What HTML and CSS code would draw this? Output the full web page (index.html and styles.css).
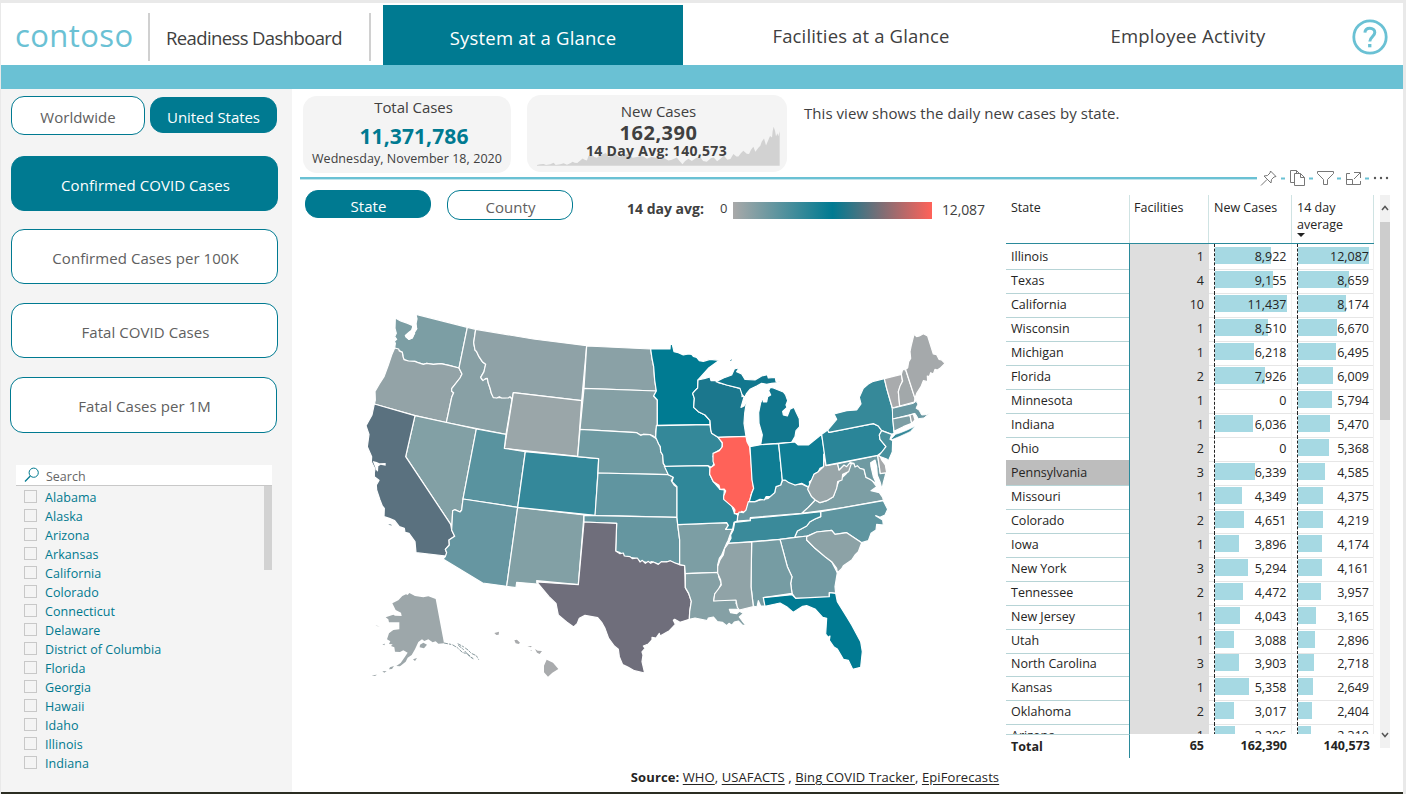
FILE: index.html
```html
<!DOCTYPE html>
<html lang="en">
<head>
<meta charset="utf-8">
<title>Readiness Dashboard</title>
<link rel="stylesheet" href="styles.css">
</head>
<body>
<div class="report">
  <header class="header">
    <div class="brand">contoso</div>
    <div class="report-title">Readiness Dashboard</div>
    <nav class="tabs">
      <a class="tab tab-active">System at a Glance</a>
      <a class="tab tab-facilities">Facilities at a Glance</a>
      <a class="tab tab-employees">Employee Activity</a>
    </nav>
    <svg class="help" viewBox="0 0 36 36"><circle cx="18" cy="18" r="16.2" fill="none" stroke="#6ac1d4" stroke-width="2.8"/><path d="M12.9 13.6C13.1 10.8 15 9.3 17.8 9.3C20.8 9.3 22.8 11 22.8 13.5C22.8 17.6 17.8 17.6 17.8 22.6" fill="none" stroke="#6ac1d4" stroke-width="3"/><rect x="16.1" y="25" width="3.3" height="3.3" fill="#6ac1d4"/></svg>
  </header>
  <div class="band"></div>
  <main class="main">
    <aside class="sidebar">
      <div class="scope">
        <button class="pill scope-world">Worldwide</button>
        <button class="pill pill-on scope-us">United States</button>
      </div>
      <div class="measures">
        <button class="pill pill-on measure">Confirmed COVID Cases</button>
        <button class="pill measure">Confirmed Cases per 100K</button>
        <button class="pill measure">Fatal COVID Cases</button>
        <button class="pill measure measure-last">Fatal Cases per 1M</button>
      </div>
      <div class="slicer">
        <div class="search">
          <svg class="search-icon" viewBox="0 0 16 16"><circle cx="9.7" cy="5.7" r="4.6" fill="none" stroke="#00798f"/><path d="M6.3 9L1 14.5" stroke="#00798f" stroke-width="1.2"/></svg>
          <span>Search</span>
        </div>
        <div class="slicer-body">
          <ul class="states" id="states"></ul>
          <div class="slicer-thumb"></div>
        </div>
      </div>
    </aside>
    <section class="content">
      <div class="cards">
        <div class="card card-total">
          <div class="card-label card-total-label">Total Cases</div>
          <div class="card-total-value">11,371,786</div>
          <div class="card-date">Wednesday, November 18, 2020</div>
        </div>
        <div class="card card-new">
          <svg class="spark" viewBox="725 120 730 121" preserveAspectRatio="none"><path fill="#d2d2d2" d="M725 240V238L735 236L745 235L752 238L765 236L775 231L781 238L795 236L805 233L815 237L825 233L832 228L838 231L846 232L855 224L862 218L868 222L875 224L880 210L890 207L897 214L905 216L915 208L925 205L932 202L940 214L950 208L960 204L972 214L985 207L1000 205L1012 216L1025 214L1035 211L1045 212L1055 219L1068 214L1080 215L1092 222L1105 216L1120 224L1130 222L1145 215L1152 224L1162 236L1170 226L1180 219L1190 226L1203 217L1215 213L1224 226L1235 228L1248 217L1256 215L1266 227L1277 218L1286 209L1297 222L1306 220L1315 205L1324 212L1330 212L1338 202L1345 195L1355 204L1362 205L1368 192L1375 183L1381 198L1390 186L1396 180L1400 168L1407 158L1413 179L1420 162L1425 150L1431 155L1433 135L1436 122L1440 134L1443 152L1447 142L1450 151L1454 136V240Z"/></svg>
          <div class="card-text">
            <div class="card-label">New Cases</div>
            <div class="card-new-value">162,390</div>
            <div class="card-avg">14 Day Avg: 140,573</div>
          </div>
        </div>
        <p class="description">This view shows the daily new cases by state.</p>
      </div>
      <div class="divider">
        <div class="rule"></div>
        <svg class="tools" viewBox="0 0 136 24">
          <g stroke="#6ac1d4" stroke-width="2"><path d="M24 12.5h4M52 12.5h4M80 12.5h4M108 12.5h4"/></g>
          <g fill="none" stroke="#777" stroke-width="1">
            <path d="M4 19.5L10 13.5M13.5 5L19 10.5L17 11L14.5 13.5L14 17L7 10L10.5 9.5L13 7Z"/>
            <path d="M37 16.5H33.5V4.5H39.5L42.5 7.5M37.5 7.500H43.500L47.500 11.500V19.500H37.500ZM43.500 7.500V11.500H47.500M39.500 4.500V7.500"/>
            <path d="M60.500 5.500H76.500V7.500L70.500 13.500V18.500H66.500V13.500L60.500 7.500Z"/>
            <path d="M93 7.500H89.500V18.500H103.500V15M89.500 13.500H95.500V18.500M97 6.500H103.500V12M103 7L97 13"/>
          </g>
          <g fill="#555"><circle cx="118" cy="12" r="1.200"/><circle cx="124" cy="12" r="1.200"/><circle cx="130" cy="12" r="1.200"/></g>
        </svg>
      </div>
      <div class="lower">
        <div class="map-pane">
          <div class="map-bar">
            <button class="pill pill-on level level-state">State</button>
            <button class="pill level level-county">County</button>
            <div class="legend">
              <b class="legend-title">14 day avg:</b>
              <span class="legend-min">0</span>
              <div class="legend-ramp"></div>
              <span class="legend-max">12,087</span>
            </div>
          </div>
          <svg class="map" viewBox="0 0 1800 1170">
            <g stroke="#fff" stroke-width="3.600" stroke-linejoin="round">
              <g>
                <path fill="#7c9ea4" d="M168 43L322 82L297 204L270 197L243 191L220 193L200 190L190 193L172 187L165 184L145 183L132 179L129 170L127 157L104 144L106 130L103 124L110 118L104 110L109 100L105 85L106 54L122 63L143 70L157 76L160 88L138 107L147 118L157 114L163 98L170 87L168 72L171 57Z"/>
                <path fill="#fff" stroke="none" d="M150 70L158 76L153 90L146 95L134 106L136 112L146 120L158 115L166 100L163 95L172 86L168 68L171 57L167 43L160 60Z"/>
                <path fill="#93a3a7" d="M104 144L116 147L118 153L127 157L129 170L132 179L145 183L165 184L172 187L190 193L200 190L220 193L243 191L270 197L297 204L306 222L300 234L275 266L275 274L281 278L275 292L259 368L165 347L43 312L46 300L45 274L58 252L72 230L85 195L95 165Z"/>
                <path fill="#88a0a5" d="M322 82L347 88L341 128L345 150L350 155L357 170L367 185L377 193L372 215L362 232L367 240L382 235L385 250L390 264L394 280L400 291L410 293L435 293L450 290L456 297L438 403L259 368L275 292L281 278L275 274L275 266L300 234L306 222L297 204Z"/>
                <path fill="#8fa2a7" d="M347 88L520 117L680 137L665 302L460 278L456 297L450 290L445 294L425 294L418 290L410 294L400 293L394 280L390 264L385 250L382 235L376 236L369 242L362 232L372 215L374 205L377 193L367 185L357 170L350 155L345 150L341 128Z"/>
                <path fill="#9aa6a9" d="M460 278L665 302L653 469L433 445Z"/>
                <path fill="#82a0a5" d="M165 347L349 387L309 597L305 630L300 636L284 629L278 632L276 672L272 673L137 470Z"/>
                <path fill="#5a717f" d="M43 312L165 347L137 470L272 673L275 690L284 709L267 720L268 735L256 748L260 758L258 768L168 758L165 725L147 700L135 697L133 685L118 680L104 662L88 655L72 650L73 625L67 618L60 600L50 570L49 555L57 541L43 530L43 518L45 507L34 485L35 470L22 440L27 403L18 377L36 345Z"/>
                <path fill="#fff" stroke="none" d="M38 483L50 486L58 490L77 489V497L62 494L55 499L54 515L48 510L45 500Z"/>
                <path fill="#59939f" d="M349 387L438 403L433 445L496 455L473 622L309 597Z"/>
                <path fill="#6696a1" d="M309 597L473 622L440 859L368 849L249 777L256 770L260 758L256 748L268 735L267 720L284 709L275 690L276 672L278 632L284 629L300 636L305 630Z"/>
                <path fill="#82a0a5" d="M473 622L672 645L655 854L530 842L532 852L470 847L468 863L440 859Z"/>
                <path fill="#34889a" d="M496 455L716 476L706 646L473 622Z"/>
              </g>
              <g transform="translate(660 0)">
                <path fill="#8aa1a6" d="M20 138L212 147L216 175L221 200L224 240L229 273L12 265Z"/>
                <path fill="#85a0a5" d="M12 265L229 273L221 288L232 300L232 372L227 395L227 415L220 408L210 404L190 403L182 406L170 398L0 388Z"/>
                <path fill="#6e9aa2" d="M0 388L170 398L182 406L190 403L210 404L227 415L232 420L236 432L241 440L242 455L248 465L250 490L256 500L265 524L54 519L56 476L-7 470Z"/>
                <path fill="#6095a0" d="M54 519L265 524L280 532L274 542L282 555L291 562V652L45 646Z"/>
                <path fill="#007b92" d="M212 147L270 147L271 132L277 134L282 155L295 158L310 165L325 162L335 163L340 169L350 172L358 182L370 184L390 178L418 181L385 205L354 240L353 264L345 272L338 280L343 295L341 322L355 335L375 345L390 362V374L232 376V300L221 288L229 273L224 240L221 200L216 175Z"/>
                <path fill="#348899" d="M229 377L390 374L392 388L395 400L414 412L422 422L427 430L426 445L403 460L399 470L406 480L396 503L383 497L256 500L250 490L248 465L242 455L241 440L236 432L227 412Z"/>
                <path fill="#1b778d" d="M354 240L375 235L390 231L393 242L410 242L415 248L440 255L480 265L487 275L486 290L493 288L488 305L483 322L492 318L501 295L494 340L492 370L498 409L414 412L395 400L392 388L390 362L375 345L355 335L341 322L343 295L338 280L345 272L353 264Z"/>
                <path fill="#11778e" d="M408 245L435 232L455 225L463 207L478 203L470 215L485 222L495 238L525 240L545 228L562 224L565 234L586 232L588 244L606 247L575 250L560 253L545 250L530 258L510 268L500 280L494 292L486 283L480 265L440 255Z"/>
                <path fill="#11778e" stroke="none" d="M450 182L456 177L453 183Z"/>
              </g>
              <g transform="translate(660 420)">
                <path fill="#6596a0" d="M12 226L291 232L293 254L299 300V374L285 369L271 364L250 366L235 372L215 365L205 369L195 366L180 364L172 356L150 352L130 348L120 338L107 333L110 250L12 246Z"/>
                <path fill="#6f6e7b" d="M12 246L110 250L107 333L120 341L130 339L133 348L150 350L157 356L172 354L180 366L187 361L196 370L205 364L212 370L220 366L235 373L244 365L260 366L271 362L285 369L299 374L314 377L316 443L326 460L334 484L329 515L328 538L300 547L284 538L280 541L286 553L268 572L240 588L238 580L228 594L216 592V600L205 612L190 618L195 625L186 636L189 645L186 665L194 699L163 692L145 682L128 674L118 650L115 628L103 618L86 595L75 565L65 547L53 533L15 526L-2 535L-8 550L-19 561L-40 546L-65 525L-72 490L-93 470L-130 426L-5 434Z"/>
                <path fill="#7c9ea4" d="M293 254L440 248L445 256L437 268L458 267L450 285L444 302L440 310L425 345L418 355L413 375L416 397L316 401L314 377L299 374V300Z"/>
                <path fill="#2f8799" d="M253 79L383 77L390 84L389 103L400 125L420 148L433 150L431 175L455 197L463 218L473 225L472 243L462 247L458 267L437 268L445 256L440 248L293 254L291 232V140L276 125L280 112L265 104Z"/>
                <path fill="#85a0a5" d="M316 401L416 397L416 410L424 430L415 450L405 460L401 482L470 478L468 490L478 507L448 508L452 518L470 521L478 514L490 520L478 531L487 543L498 556L488 556L475 543L463 546L455 556L447 550L440 557L427 547L412 545L400 531L385 534L382 542L345 534L328 538L329 515L334 484L326 460L316 443Z"/>
                <path fill="#ff6259" d="M414 -8L498 -11L501 5L509 20L513 60L517 120L521 145L513 165L508 190L502 205L495 218L485 214L479 221L463 221L465 210L460 203L431 178V168L437 153L432 147L420 148L417 136L400 125L389 103L390 84L403 75L399 64V40L418 32L427 20V8Z"/>
              </g>
              <g transform="translate(1140 60)">
                <path fill="#6997a1" d="M128 480L145 482L165 495L185 492L205 502L205 510L215 530L226 540L205 562L185 580L31 593V600L-8 603L-7 590L-3 576L10 578L18 570L25 545L45 545L60 540L85 535L104 518L108 500L122 495Z"/>
                <path fill="#11778e" d="M91 202L100 204L115 210L130 216L137 225L143 242L138 255L141 262L128 274L130 285L142 288L150 268L162 262L170 280L178 296L179 320L168 332L165 350L155 367L62 374L67 345L57 310L56 278L62 248L72 230L70 246L80 246L83 230L92 225L86 212Z"/>
                <path fill="#0f7d94" d="M30 380L62 374L116 371L127 480L122 495L108 500L104 518L90 530L78 530L73 540L60 538L45 545L28 545L35 520L41 505L36 480L33 430Z"/>
                <path fill="#0f7e95" d="M116 371L165 366L175 375L205 375L245 343L254 400L251 440L240 445L235 455L222 463L218 478L208 486L210 500L200 498L185 490L165 495L145 487L135 480H127Z"/>
                <path fill="#7c9ea4" d="M185 580L205 562L226 540L240 548L260 542L280 530L290 500L297 482L320 460L332 430L345 432L372 448L378 472L395 480L410 500L393 512L418 518L428 532L430 541L310 563Z"/>
                <path fill="#99a6a9" d="M251 402L258 437L293 431L297 450L310 436L335 428L326 455L308 463L306 480L293 485L290 505L280 530L260 542L240 548L226 540L215 530L203 508L210 490L222 463L235 455L251 440Z"/>
                <path fill="#6f9aa2" d="M293 431L413 406L421 460L438 458L430 488L426 508L420 485L412 466L410 440L405 420L392 428L393 440L400 470L410 492L390 478L378 472L372 448L360 445L352 437L345 441L342 430L330 428L320 440L312 435L297 450Z"/>
                <path fill="#a6a9ab" d="M413 406L419 405L425 420L436 435L440 458L421 461Z"/>
                <path fill="#2a8598" d="M245 343L263 330L267 337L400 311L415 318L425 332L418 345L420 358L438 380L428 395L413 406L258 436Z"/>
                <path fill="#368999" d="M267 337L263 330L290 298L282 282L320 272L350 270L363 252L358 232L370 205L385 192L400 184L433 176L440 205L450 240L457 265L462 340L455 343L425 332L415 318L400 311Z"/>
                <path fill="#48909d" d="M425 332L455 343L450 358L458 362L457 395L445 423L440 417L416 408L438 380L420 358L418 345Z"/>
                <path fill="#368999" stroke-width="2" d="M454 356L467 343L482 338L502 330L525 319L510 335L480 349L458 358Z"/>
                <path fill="#a9abad" d="M433 176L484 163L487 183L475 215L479 258L457 264L450 240L440 205Z"/>
                <path fill="#a2a8aa" d="M484 163L488 148L497 150L525 235L523 246L479 258L475 215L480 198L488 183Z"/>
                <path fill="#a5a9ab" d="M497 148L503 143L506 125L512 115L510 95L514 75L522 43L530 50L538 48L550 41L563 48L580 102L590 104L597 118L605 120L615 130L600 145L592 150L585 148L580 162L572 158L568 170L562 168L563 185L550 182L543 200L530 220L525 235Z"/>
                <path fill="#6897a1" stroke-width="3" d="M457 265L520 250L528 244L534 252L528 265L537 270L545 285L558 284L568 280L552 294L535 296L525 280L510 284L458 297Z"/>
                <path fill="#7d9ea4" d="M458 297L510 286L515 310L490 320L462 334Z"/>
                <path fill="#9ea7aa" d="M510 285L520 282L525 300L515 310Z"/>
              </g>
              <g transform="translate(1020 360)">
                <path fill="#5e95a0" d="M284 352L292 333L320 318L330 305L345 297L362 290V275L550 242L563 268L555 285L540 292L527 287L548 300L550 315L530 313L528 330L513 340L505 362L485 368L440 338L405 343L395 331L350 336L322 348Z"/>
                <path fill="#3a8a9a" d="M104 307L151 302V295L300 282L362 275V290L345 297L330 305L320 318L292 333L284 352L240 358L155 365L85 370L93 355L92 345L100 330Z"/>
                <path fill="#7099a2" d="M240 358L322 348L320 360L345 385L395 425L412 458L405 500L407 520L388 518V535L287 535L276 520L272 490L276 470L262 440Z"/>
                <path fill="#8ca2a6" d="M320 350L350 336L395 331L405 343L440 338L485 368L475 395L465 405L455 420L430 437L425 446L412 458L410 445L395 425L375 410L345 385L320 360Z"/>
                <path fill="#769ca3" d="M155 366L240 358L262 440L276 470L272 490L276 520L190 533L196 558L182 558L175 542L171 561L160 558L153 500Z"/>
                <path fill="#90a3a7" d="M85 370L155 366L153 500L160 560L118 570L112 562L108 540L41 543L44 522L64 495L62 480L53 460L53 440L60 420L70 405L74 385Z"/>
                <path fill="#007a92" d="M190 533L276 524L287 535L388 530L388 518L407 520L412 545L440 590L455 615L482 665L487 695L482 742L458 748L445 721L430 718L412 687L402 681L388 661L390 648L385 652L377 642L380 595L368 592L345 567L320 557L308 559L280 577L260 560L240 549L195 559Z"/>
              </g>
            </g>
            <g transform="translate(15 780)">
              <path fill="#9da7aa" d="M133 99L150 108L175 112L190 109L212 117L237 250L220 251L212 244L203 247L190 238L178 243L171 238L160 246L150 268L140 285L128 293L122 305L105 319L94 318L107 309L120 290L128 278L115 271L105 276L90 275L88 262L78 258L83 253L72 252L76 244L66 238L72 220L85 210L103 208V187L72 187L70 178L62 172L85 164L90 167L110 168L108 158L92 150L82 130L100 121L112 108L123 103L128 105ZM165 254L175 248L186 254L177 265L164 262ZM144 298L156 294L150 303ZM75 322L87 318L81 327L72 328ZM52 334L65 333L58 338ZM20 346L36 344L30 348ZM31 195L44 200L36 198ZM52 253L60 251L58 256Z"/>
              <path fill="none" stroke="#88999d" stroke-width="3" stroke-dasharray="12 3 7 4" d="M237 249L262 254L277 263L292 277L310 283L325 299M278 251L295 260L309 270L319 280L334 287L341 299M280 256L296 269L311 287L325 296"/>
              <path fill="#a9abad" d="M388 219L402 215L401 224L394 225ZM448 241L456 239L465 248L461 252L452 250ZM487 259L500 258L498 262ZM496 270L500 270L499 273ZM510 267L518 272L531 273L524 282L516 278ZM545 299L564 308L580 327L562 338L549 350L537 337V317Z"/>
            </g>
            <path fill="#8fa0a9" d="M85 672L93 673L96 677L88 675Z"/>
          </svg>
        </div>
        <div class="grid-pane">
          <div class="grid">
            <div class="grid-head">
              <div class="cell c-state">State</div>
              <div class="cell c-fac">Facilities</div>
              <div class="cell c-new">New Cases</div>
              <div class="cell c-avg">14 day average<i class="sort"></i></div>
            </div>
            <div class="grid-body" id="rows"></div>
            <div class="grid-total">
              <div class="cell c-state">Total</div>
              <div class="cell c-fac">65</div>
              <div class="cell c-new">162,390</div>
              <div class="cell c-avg">140,573</div>
            </div>
          </div>
          <div class="scrollbar">
            <svg class="chev" viewBox="0 0 10 10"><path d="M2 7L5 3.500L8 7" fill="none" stroke="#555" stroke-width="1.500"/></svg>
            <div class="thumb"></div>
            <svg class="chev chev-down" viewBox="0 0 10 10"><path d="M2 3L5 6.500L8 3" fill="none" stroke="#555" stroke-width="1.500"/></svg>
          </div>
        </div>
      </div>
      <footer class="sources"><b>Source:</b> <a>WHO</a>, <a>USAFACTS</a> , <a>Bing COVID Tracker</a>, <a>EpiForecasts</a></footer>
    </section>
  </main>
</div>
<script src="app.js"></script>
</body>
</html>
```
FILE: styles.css
```css
* { box-sizing: border-box; }
body {
  margin: 0;
  background: #e9e9e9;
  font-family: "Open Sans", "Noto Sans", sans-serif;
  color: #404040;
  overflow: hidden;
}
.report {
  height: 794px;
  border: solid #e9e9e9;
  border-width: 3px 3px 0 1px;
  background: #fff;
  display: flex;
  flex-direction: column;
  box-shadow: inset 0 -2px #2b2d22;
}
.header { height: 62px; display: flex; align-items: flex-start; flex: none; }
.brand {
  width: 149px; height: 48px; margin-top: 10px; padding-left: 14px;
  border-right: 2px solid #d0d0d0;
  color: #6ac1d4; font-size: 31px; line-height: 45px; letter-spacing: .4px;
}
.report-title {
  width: 221px; height: 48px; margin-top: 10px; padding-left: 16px;
  border-right: 2px solid #d0d0d0;
  font-size: 18.5px; line-height: 50px; letter-spacing: -.62px;
}
.tabs { display: flex; margin-left: 12px; }
.tab { display: block; text-align: center; font-size: 18.5px; line-height: 62px; letter-spacing: .15px; height: 60px; }
.tab-active { width: 300px; margin-top: 2px; background: #007a91; color: #fff; line-height: 65px; letter-spacing: .2px; }
.tab-facilities { width: 356px; line-height: 66px; }
.tab-employees { width: 298px; line-height: 66px; letter-spacing: .25px; }
.help { width: 36px; height: 36px; margin: 16px 0 0 15px; }
.band { height: 24px; background: #6ac1d4; flex: none; }
.main { display: flex; height: 703px; }

.sidebar { width: 291px; background: #f4f4f4; padding: 7px 14px 0 10px; flex: none; }
.pill {
  display: block; padding: 0; margin: 0;
  font-family: inherit; font-size: 15px; letter-spacing: .06px; color: #606060;
  background: #fff; border: 1px solid #007a91; border-radius: 13px; text-align: center;
}
.pill-on { background: #007a91; color: #fff; }
.scope { display: flex; gap: 5px; height: 60px; }
.scope-world { width: 134px; height: 39px; padding-top: 3px; }
.scope-us { width: 127px; height: 36px; margin-top: 1px; padding-top: 4px; letter-spacing: -.05px; }
.measures { display: grid; row-gap: 18.400px; }
.measure { width: 267px; height: 55px; padding-top: 3px; padding-left: 2px; }
.measure-last { margin-left: -1px; margin-top: .5px; height: 56px; }
.slicer { width: 256px; margin: 32px 0 0 5px; }
.search {
  display: flex; gap: 6px; height: 21px; padding-left: 8px; background: #fff;
  border-bottom: 1px solid #c8c8c8; color: #666; font-size: 12.500px; line-height: 23px;
}
.search-icon { width: 16px; height: 16px; margin-top: 2px; }
.slicer-body { display: flex; justify-content: space-between; }
.states { list-style: none; margin: 2px 0 0 8px; padding: 0; color: #00798f; font-size: 12.500px; }
.states li { height: 19px; line-height: 19px; display: flex; gap: 8px; letter-spacing: .06px; }
.box { width: 13px; height: 13px; margin-top: 2px; border: 1px solid #c8c8c8; }
.slicer-thumb { width: 8px; height: 84px; background: #d2d2d2; }

.content { flex: 1; display: flex; flex-direction: column; }
.cards { display: flex; height: 79px; padding: 6px 0 0 11px; }
.card { background: #f4f4f4; border-radius: 14px; text-align: center; }
.card-label { font-size: 15px; line-height: 22px; letter-spacing: -.05px; }
.card-total { width: 208px; height: 77px; margin: 1px 16px 0 0; }
.card-total-label { padding-left: 13px; }
.card-total-value { font-size: 21px; font-weight: 700; line-height: 34px; color: #007a91; padding-left: 14px; padding-top: 1px; letter-spacing: .1px; }
.card-date { font-size: 12.500px; line-height: 12px; white-space: nowrap; letter-spacing: .06px; }
.card-new { width: 260px; height: 77px; display: grid; }
.card-new > * { grid-area: 1 / 1; }
.spark { width: 243px; height: 40px; margin: 31px 0 0 10px; }
.card-text { padding: 5px 0 0 3px; }
.card-new-value { font-size: 20px; font-weight: 700; line-height: 21px; letter-spacing: .5px; }
.card-avg { font-size: 14px; font-weight: 700; line-height: 16px; letter-spacing: .3px; margin-left: -4px; }
.description { margin: 7px 0 0 17px; font-size: 15px; line-height: 22px; letter-spacing: .05px; }
.divider { display: flex; align-items: center; height: 20px; padding-left: 8px; }
.rule { width: 957px; height: 2px; background: #6ac1d4; box-shadow: 0 1px #c2e5ec; }
.tools { width: 136px; height: 24px; flex: none; }
.lower { display: flex; height: 576px; }
.map-pane { width: 714px; }
.map-bar { display: flex; padding-left: 13px; height: 37px; padding-top: 2px; }
.level { width: 126px; padding-left: 1px; }
.level-state { height: 28px; padding-top: 3px; margin-right: 16px; }
.level-county { height: 30px; padding-top: 3px; }
.legend { display: flex; align-items: center; height: 36px; margin-left: 54px; font-size: 14px; }
.legend-title { width: 93px; letter-spacing: 0; }
.legend-min { width: 13px; font-size: 13px; }
.legend-ramp { width: 199px; height: 17px; margin-top: 4px; background: linear-gradient(90deg, #a9a9a9, #007a91 50%, #ff6259); }
.legend-max { margin: 3px 0 0 10px; letter-spacing: -.15px; }
.map { display: block; width: 600px; height: 390px; margin: 75px 0 0 68px; }

.grid-pane { display: flex; gap: 6px; padding-top: 7px; }
.grid { width: 368px; font-size: 12.500px; color: #252423; }
.grid-head, .row, .grid-total { display: grid; grid-template-columns: 124px 79px 83px 82px; }
.grid-head { height: 49px; border-bottom: 1px solid #2b8a9b; }
.grid-head .cell { padding: 4px 5px; line-height: 17px; border-right: 1px solid #cfe3e3; }
.grid-head .c-fac { padding-left: 4px; }
.grid-body { height: 490px; overflow: hidden; }
.row { height: 23.970px; }
.row .cell { border-bottom: 1px solid #e6e6e6; line-height: 25px; position: relative; }
.row .c-state { padding-left: 5px; border-bottom-color: #b7d4d6; border-right: 1px solid #2b8a9b; }
.row .c-fac { background: #dedede; text-align: right; padding-right: 5px; }
.row .c-new, .row .c-avg { text-align: right; padding-right: 4.500px; border-right: 1px solid #f0f0f0; }
.row .c-avg { padding-right: 4px; }
.row .c-new::before, .row .c-avg::before { content: ""; position: absolute; left: 5px; top: 0; bottom: -1px; border-left: 1px dashed #222; }
.row-selected .c-state { background: #bdbdbd; }
.bar { position: absolute; left: 5.500px; top: 3px; height: 17px; background: #a6d9e3; }
.num { position: relative; }
.sort { display: block; width: 0; border: 4px solid transparent; border-top-color: #222; border-bottom: 0; }
.grid-total { height: 23px; font-weight: 700; }
.grid-total .cell { line-height: 24px; text-align: right; padding-right: 5px; }
.grid-total .c-avg { padding-right: 4px; }
.grid-total .c-state { text-align: left; padding-left: 5px; border-top: 1px solid #b7d4d6; border-right: 1px solid #2b8a9b; line-height: 23px; }
.scrollbar { width: 10px; height: 553px; background: #f1f1f1; display: flex; flex-direction: column; }
.chev { width: 10px; height: 10px; margin: 8px 0 9px; }
.thumb { height: 198px; background: #cdcdcd; }
.chev-down { margin: auto 0 8px; }
.sources { text-align: center; margin-top: 5px; width: 1046px; font-size: 13px; letter-spacing: .1px; line-height: 17px; color: #252423; }
.sources a { text-decoration: underline; text-underline-offset: 2px; }
```
FILE: app.js
```js
const stateNames = ["Alabama", "Alaska", "Arizona", "Arkansas", "California", "Colorado", "Connecticut", "Delaware",
  "District of Columbia", "Florida", "Georgia", "Hawaii", "Idaho", "Illinois", "Indiana"];
document.getElementById("states").innerHTML =
  stateNames.map(name => `<li><span class="box"></span>${name}</li>`).join("");

const data = [
  ["Illinois", 1, 8922, 12087], ["Texas", 4, 9155, 8659], ["California", 10, 11437, 8174],
  ["Wisconsin", 1, 8510, 6670], ["Michigan", 1, 6218, 6495], ["Florida", 2, 7926, 6009],
  ["Minnesota", 1, 0, 5794], ["Indiana", 1, 6036, 5470], ["Ohio", 2, 0, 5368],
  ["Pennsylvania", 3, 6339, 4585], ["Missouri", 1, 4349, 4375], ["Colorado", 2, 4651, 4219],
  ["Iowa", 1, 3896, 4174], ["New York", 3, 5294, 4161], ["Tennessee", 2, 4472, 3957],
  ["New Jersey", 1, 4043, 3165], ["Utah", 1, 3088, 2896], ["North Carolina", 3, 3903, 2718],
  ["Kansas", 1, 5358, 2649], ["Oklahoma", 2, 3017, 2404], ["Arizona", 1, 3206, 2310]
];
const bar = (value, max, full) =>
  `<span class="bar" style="width:${(value / max * full).toFixed(1)}px"></span><span class="num">${value.toLocaleString("en-US")}</span>`;
document.getElementById("rows").innerHTML = data.map(([name, fac, cases, avg]) => `
  <div class="row${name === "Pennsylvania" ? " row-selected" : ""}">
    <div class="cell c-state">${name}</div>
    <div class="cell c-fac">${fac}</div>
    <div class="cell c-new">${bar(cases, 11437, 72.5)}</div>
    <div class="cell c-avg">${bar(avg, 12087, 71.5)}</div>
  </div>`).join("");
```
